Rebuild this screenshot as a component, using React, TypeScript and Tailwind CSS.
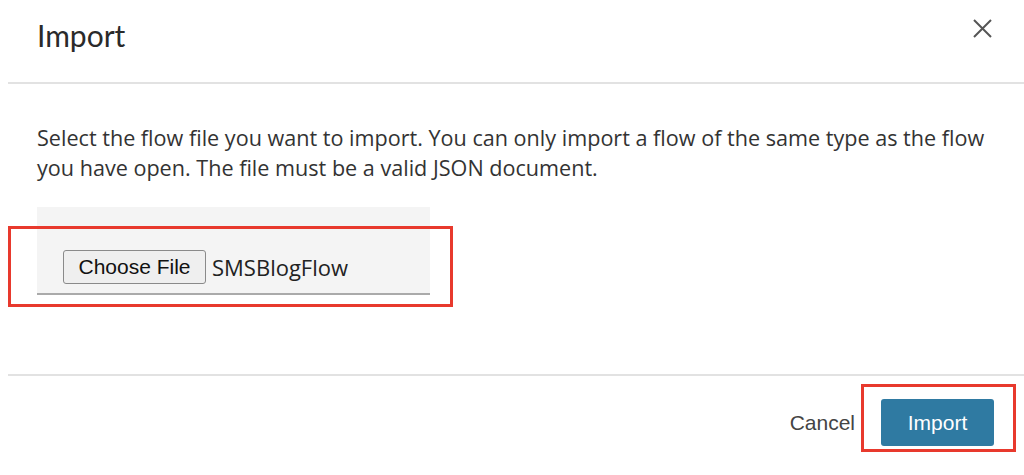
import React from "react";

export default function App() {
  return (
    <div className="w-[1024px] h-[475px] bg-white overflow-hidden relative">
      <div className="ml-[8px] flex flex-col h-full">
        {/* Header */}
        <div className="h-[82px] flex items-start justify-between pl-[29px] pr-[31px] border-b-2 border-[#e2e2e2] box-content">
          <h1 className="text-[30px] text-[#2a2a2a] leading-none mt-[20px]" style={{ fontFamily: '"Lato", sans-serif' }}>
            Import
          </h1>
          <svg width="21" height="21" viewBox="0 0 21 21" className="mt-[18px]">
            <path d="M2 2 L19 19 M19 2 L2 19" stroke="#555" strokeWidth="2" fill="none" />
          </svg>
        </div>
        {/* Body */}
        <div className="h-[290px] pl-[29px] pr-[20px] pt-[39px]" style={{ fontFamily: '"Open Sans", sans-serif' }}>
          <p className="text-[21.6px] leading-[30px] text-[#333]">
            Select the flow file you want to import. You can only import a flow of the same type as the flow you have open. The file must be a valid JSON document.
          </p>
          <div className="mt-[24px] w-[393px] h-[88px] bg-[#f4f4f4] border-b-2 border-[#aaaaaa] pl-[26px] pt-[43px] flex items-start gap-[6px]">
            <div
              className="h-[34px] w-[143px] flex items-center justify-center bg-[#efefef] border border-[#8a8a8a] rounded-[3px] text-[21px] text-[#111]"
              style={{ fontFamily: '"Liberation Sans", Arial, sans-serif' }}
            >
              Choose File
            </div>
            <span className="text-[22px] leading-[34px] text-[#222]">SMSBlogFlow</span>
          </div>
        </div>
        {/* Footer */}
        <div className="flex-1 border-t-2 border-[#e2e2e2] flex items-start justify-end pr-[30px] pt-[23px] gap-[26px]" style={{ fontFamily: '"Liberation Sans", Arial, sans-serif' }}>
          <span className="text-[21px] leading-[47px] text-[#444]">Cancel</span>
          <div className="h-[47px] w-[113px] rounded-[3px] bg-[#2f7aa2] flex items-center justify-center text-white text-[21px]">
            Import
          </div>
        </div>
      </div>
      {/* Annotation boxes */}
      <div className="absolute left-[8px] top-[226px] w-[445px] h-[81px] border-[3px] border-[#e8392d]" />
      <div className="absolute left-[861px] top-[384px] w-[155px] h-[68px] border-[3px] border-[#e8392d]" />
    </div>
  );
}
